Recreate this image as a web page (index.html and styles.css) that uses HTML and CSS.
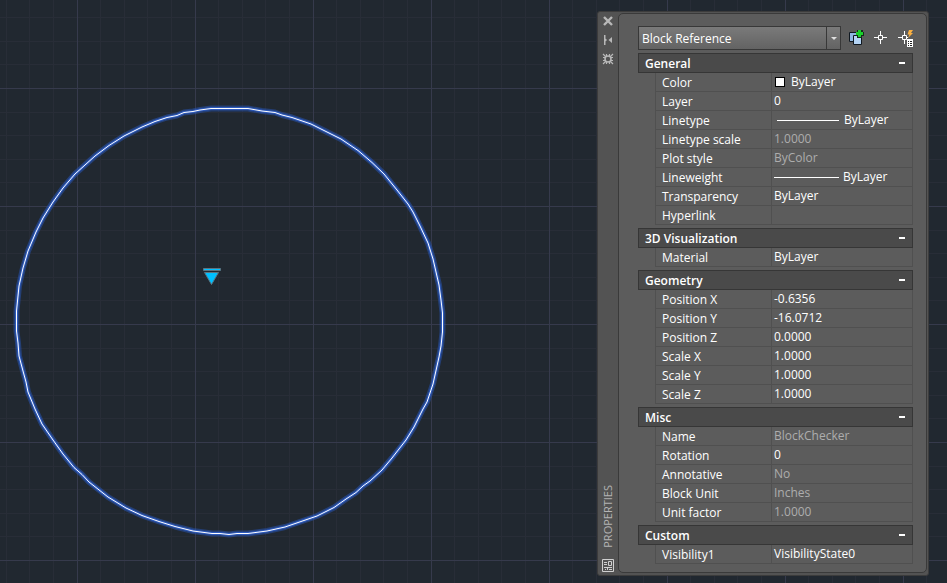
FILE: index.html
```html
<!DOCTYPE html>
<html lang="en">
<head>
    <meta charset="UTF-8">
    <meta name="viewport" content="width=device-width, initial-scale=1.0">
    <title>Properties</title>
    <link rel="stylesheet" href="styles.css">
</head>
<body>
    <!-- Drawing area -->
    <svg class="drawing" width="100%" height="100%" aria-label="Drawing area">
        <defs>
            <pattern id="grid" x="77" y="88" width="118" height="118" patternUnits="userSpaceOnUse">
                <path class="grid-minor" d="M23.5 0V118M47.5 0V118M70.5 0V118M94.5 0V118M0 24.5H118M0 47.5H118M0 71.5H118M0 94.5H118"/>
                <path class="grid-major" d="M.5 0V118M0 .5H118"/>
            </pattern>
            <path id="circle" d="M211 108.5L200 110L193 111.500L184 112.5L177 115.5L167 117.5L155 121.5L142 127L124 136L109 145.5L95 156L85 165L75 174L63 188L53 202L43 218L36 232L28 251L23 268L19 286L16.5 311V331L18 343L19 356L23 371L26 382L28 392L35 409L42 424L53 440L63 454L74 467.5L82 474.5L89 482L108 497L126 508L142 515.5L159 521.5L175 526.5L193 531L212 533.5H220L229 534.5L237 533.5H248L267 531L285 527L301 521.5L317 516L334 507.5L346 499L356 492.5L363 486L370 481L382 470L392 458L399 449L406 440L414 427L423 409L427 402L433 384L439 357L441 346L442.5 332V313L441 300L439 285L433 259L428 243L420 226L413 212L408 204L397 190L384 174L372 162.5L358 150.5L341 139L326 131.5L311 124L292 117.5L282 115L275 112.5L262 111L248 108.5Z"/>
        </defs>
        <rect width="100%" height="100%" fill="url(#grid)"/>
        <use href="#circle" class="glow glow-outer"/>
        <use href="#circle" class="glow glow-inner"/>
        <use href="#circle" class="outline"/>
        <g class="grip">
            <path d="M203.500 268.500H220.500V270.500H203.500Z"/>
            <path d="M204.500 272.500H218.500L211.500 284.500Z"/>
        </g>
    </svg>

    <main class="palette">
        <div class="titlebar">
            <button class="bar-button" aria-label="Close">
                <svg width="12" height="12"><path d="M2 2L10 10M10 2L2 10" stroke="#b8b8b8" stroke-width="2.400"/></svg>
            </button>
            <button class="bar-button" aria-label="Auto-hide">
                <svg width="12" height="12"><path d="M2 1H3.500V11H2ZM3 4L5 6L3 8ZM10 3V9L6.500 6Z" fill="#b8b8b8"/></svg>
            </button>
            <button class="bar-button" aria-label="Settings">
                <svg width="12" height="12"><circle cx="6" cy="6" r="3" fill="none" stroke="#b8b8b8" stroke-width="1.600"/><path d="M4.500 1V3M7.500 1V3M4.500 9V11M7.500 9V11M1 4.500H3M1 7.500H3M9 4.500H11M9 7.500H11M1 1L4 4M8 8L11 11M11 1L8 4M4 8L1 11" stroke="#b8b8b8" stroke-width="1.200"/></svg>
            </button>
            <h1 class="title">PROPERTIES</h1>
            <button class="bar-button" aria-label="Palette menu">
                <svg width="12" height="13" fill="none" stroke="#d0d0d0"><path d="M.5 .5H11.500V12.500H.5ZM2 3.500H5M2 5.500H5M6.500 2.500H9.500V6.500H6.500ZM2 8.500H10M5.500 8V11M7 10.500H10M3 10.500H4"/></svg>
            </button>
        </div>

        <div class="content">
            <div class="toolbar">
                <div class="combo">
                    <select aria-label="Object type">
                        <option>Block Reference</option>
                    </select>
                    <span class="combo-arrow"></span>
                </div>
                <button class="tool" aria-label="Toggle PICKADD">
                    <svg width="16" height="16">
                        <path d="M.5 2.500H8.500V11.500H.5Z" fill="#8fb6e2" stroke="#101820"/>
                        <path d="M4.500 5.500H12.500V14.500H4.500Z" fill="#b4d4f5" stroke="#101820"/>
                        <path d="M8 0H14V2H15V6H13V8H8V6H7V2H8Z" fill="#14301a"/>
                        <path d="M9 0H12V2H14V5H12V7H9V5H7V2H9Z" fill="#19cf2b"/>
                    </svg>
                </button>
                <button class="tool" aria-label="Select objects">
                    <svg width="16" height="16" fill="none" stroke="#fff"><path d="M7.500 1V5M7.500 10V14M1 7.500H5M10 7.500H14M5.500 5.500H9.500V9.500H5.500Z"/></svg>
                </button>
                <button class="tool" aria-label="Quick select">
                    <svg width="16" height="18">
                        <path d="M7.500 2V6M7.500 11V15M1 8.500H5M10 8.500H11M5.500 6.500H9.500V10.500H5.500Z" fill="none" stroke="#fff"/>
                        <path d="M12 1H16L14 4H16L11 9L12.500 5.500H10.500Z" fill="#fbb040"/>
                        <path d="M10 10H16V18H10Z" fill="#fff"/>
                        <path d="M11 12.500H12M13 12.500H15M11 14.500H12M13 14.500H15M11 16.500H12M13 16.500H15" stroke="#222"/>
                    </svg>
                </button>
            </div>

            <section class="group">
                <button class="group-head">General</button>
                <table>
                    <tr><th>Color</th><td><span class="cell"><i class="swatch"></i>ByLayer</span></td></tr>
                    <tr><th>Layer</th><td>0</td></tr>
                    <tr><th>Linetype</th><td><span class="cell"><i class="line line-short"></i>ByLayer</span></td></tr>
                    <tr><th>Linetype scale</th><td class="readonly">1.0000</td></tr>
                    <tr><th>Plot style</th><td class="readonly">ByColor</td></tr>
                    <tr><th>Lineweight</th><td><span class="cell"><i class="line"></i>ByLayer</span></td></tr>
                    <tr><th>Transparency</th><td>ByLayer</td></tr>
                    <tr><th>Hyperlink</th><td></td></tr>
                </table>
            </section>

            <section class="group">
                <button class="group-head">3D Visualization</button>
                <table>
                    <tr><th>Material</th><td>ByLayer</td></tr>
                </table>
            </section>

            <section class="group">
                <button class="group-head">Geometry</button>
                <table>
                    <tr><th>Position X</th><td>-0.6356</td></tr>
                    <tr><th>Position Y</th><td>-16.0712</td></tr>
                    <tr><th>Position Z</th><td>0.0000</td></tr>
                    <tr><th>Scale X</th><td>1.0000</td></tr>
                    <tr><th>Scale Y</th><td>1.0000</td></tr>
                    <tr><th>Scale Z</th><td>1.0000</td></tr>
                </table>
            </section>

            <section class="group">
                <button class="group-head">Misc</button>
                <table>
                    <tr><th>Name</th><td class="readonly">BlockChecker</td></tr>
                    <tr><th>Rotation</th><td>0</td></tr>
                    <tr><th>Annotative</th><td class="readonly">No</td></tr>
                    <tr><th>Block Unit</th><td class="readonly">Inches</td></tr>
                    <tr><th>Unit factor</th><td class="readonly">1.0000</td></tr>
                </table>
            </section>

            <section class="group">
                <button class="group-head">Custom</button>
                <table>
                    <tr><th>Visibility1</th><td>VisibilityState0</td></tr>
                </table>
            </section>
        </div>
    </main>
</body>
</html>
```

FILE: styles.css
```css
* {
    box-sizing: border-box;
}

body {
    display: flex;
    justify-content: flex-end;
    align-items: flex-start;
    min-height: 100vh;
    margin: 0;
    padding: 11px 18px 8px;
    background-color: #212830;
    color: #fff;
    font-family: "Open Sans", "Noto Sans", sans-serif;
    font-size: 12px;
}

button,
select {
    margin: 0;
    padding: 0;
    border: 0;
    background: none;
    color: inherit;
    font: inherit;
}

svg {
    display: block;
}

/* drawing area lies under the palette */
.drawing {
    position: fixed;
    inset: 0;
}

.grid-minor {
    stroke: #282d37;
}

.grid-major {
    stroke: #363a4c;
}

.glow,
.outline {
    fill: none;
    stroke-linejoin: round;
}

.glow-outer {
    stroke: #2856b8;
    stroke-opacity: 0.5;
    stroke-width: 6px;
}

.glow-inner {
    stroke: #2f62d0;
    stroke-opacity: 0.8;
    stroke-width: 3px;
}

.outline {
    stroke: #fff;
}

.grip {
    fill: #00bfff;
    stroke: #5c7480;
}

/* palette */
.palette {
    position: relative;
    display: flex;
    width: 332px;
    padding: 1px 1px 2px 0;
    border: 1px solid #3c3c3c;
    border-radius: 3px;
    background-color: #535353;
}

.titlebar {
    display: flex;
    flex-direction: column;
    align-items: center;
    gap: 7px;
    width: 20px;
    padding: 2px 0;
}

.bar-button {
    display: grid;
    place-items: center;
    height: 12px;
}

.title {
    margin: auto 0 4px;
    color: #b4b4b4;
    font-size: 11px;
    font-weight: 400;
    line-height: 16px;
    writing-mode: vertical-rl;
    transform: rotate(180deg);
}

.content {
    flex: 1;
    padding: 12px 13px 8px 19px;
    border: 1px solid #3a3a3a;
    border-radius: 5px;
    background-color: #5c5c5c;
}

.toolbar {
    display: flex;
    align-items: center;
    gap: 8px;
    margin-bottom: 3px;
}

.combo {
    display: flex;
    flex: 1;
    position: relative;
    height: 24px;
}

.combo select {
    width: 100%;
    padding-left: 3px;
    border: 1px solid #383838;
    background: linear-gradient(#7a7a7a, #636363);
    appearance: none;
}

.combo-arrow {
    position: absolute;
    top: 0;
    right: 0;
    display: grid;
    place-items: center;
    width: 15px;
    height: 24px;
    border: 1px solid #383838;
    pointer-events: none;
}

.combo-arrow::after {
    content: "";
    border: 3px solid transparent;
    border-top-color: #e0e0e0;
    border-bottom: 0;
}

.group + .group {
    margin-top: 3px;
}

.group-head {
    display: flex;
    align-items: center;
    justify-content: space-between;
    width: 100%;
    height: 20px;
    padding: 0 7px 0 6px;
    border: 1px solid #363636;
    background-color: #4a4a4a;
    font-weight: 600;
}

.group-head::after {
    content: "";
    width: 6px;
    height: 2px;
    background-color: #fff;
}

table {
    width: 100%;
    padding-left: 17px;
    border-spacing: 0;
    table-layout: fixed;
}

th,
td {
    height: 19px;
    padding: 0;
    border: 0 solid #505050;
    line-height: 16px;
    text-align: left;
    white-space: nowrap;
}

th {
    width: 116px;
    padding: 2px 0 0 6px;
    border-width: 0 0 1px 1px;
    font-weight: 400;
}

td {
    padding: 1px 0 1px 2px;
    border-width: 0 1px 1px;
}

.readonly {
    color: #adadad;
}

.cell {
    display: flex;
    align-items: center;
}

.swatch {
    width: 10px;
    height: 10px;
    margin: 0 6px 0 1px;
    border: 1px solid #000;
    background-color: #fff;
}

.line {
    width: 65px;
    height: 1px;
    margin-right: 4px;
    background-color: #fff;
}

.line-short {
    width: 62px;
    margin: 0 5px 0 3px;
}
```
